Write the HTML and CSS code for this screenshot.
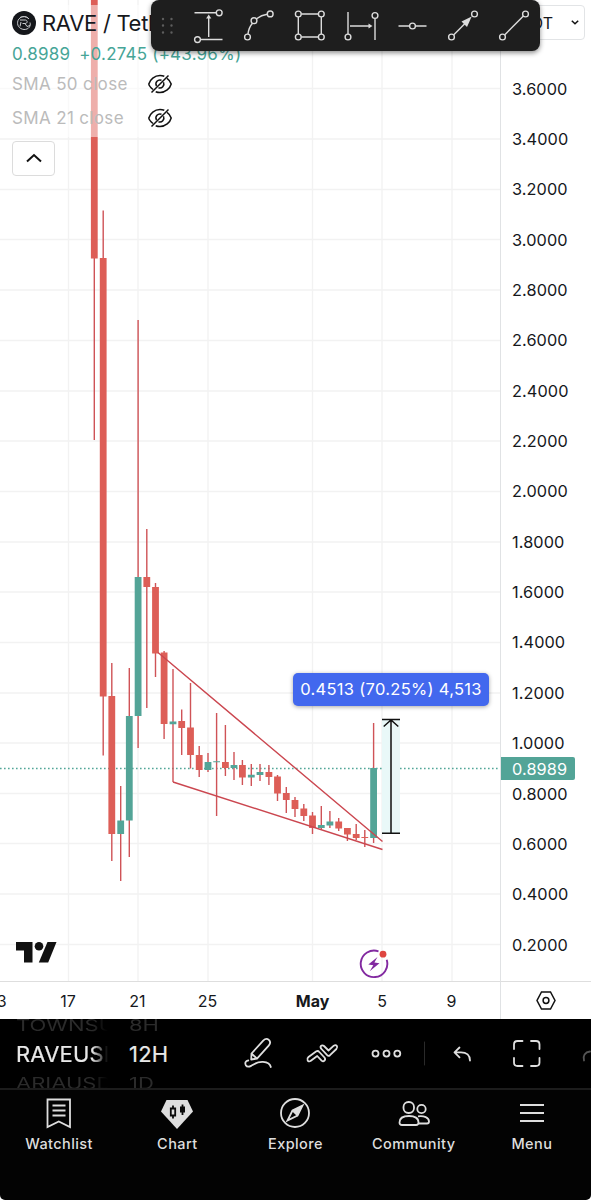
FILE: index.html
```
<!DOCTYPE html>
<html lang="en">
<head>
    <meta charset="UTF-8">
    <meta name="viewport" content="width=device-width, initial-scale=1.0">
    <title>RAVE / Tether</title>
    <link rel="stylesheet" href="styles.css">
</head>
<body>
    <div class="app">
        <main class="chart">
            <section class="pane">
                <svg class="plot" viewBox="0 0 500 981">
                    <!-- grid -->
                    <path class="grid" d="M0 88.5H500M0 139H500M0 189.5H500M0 239.5H500M0 290H500M0 340.5H500M0 391H500M0 441H500M0 491.5H500M0 542H500M0 592H500M0 642.5H500M0 693H500M0 743H500M0 793.5H500M0 843.5H500M0 894H500M0 944.5H500"/>
                    <path class="grid" d="M68.5 0V981M138 0V981M208 0V981M312.5 0V981M382 0V981M452 0V981"/>
                    <path class="price-line" d="M0 768.5H500"/>
                    <rect class="range" x="382" y="720" width="18" height="113"/>
                    <!-- candles -->
                    <path class="wick" d="M94.3 258V440M103.2 210.5V755.5M111.8 663V861M120.7 786V881M129.3 668V857M138.1 320V748M146.8 529V708M155.5 583V677M164.1 651V739M173 669V782M181.7 709.5V755M190.5 683V768.5M199.2 746V777M208 753V772M216.6 713V816M225.4 725V776M234 752V780M242.4 760V785M251.3 764V786M260 764V781M268.9 765V785M277.5 775V801M286.3 787V813M295 797V817M303.8 804V821M312.5 812V834M321.3 806V829M329.9 811V828M338.7 818V831M347.4 828V841M356.2 824V840M364.8 830V847M373.6 723V843"/>
                    <path class="down" d="M94.3 0V258.5M103.2 258V696.5M111.8 696V834M146.8 577V587M155.5 587V653.5M164.1 652.5V724M181.7 721V728M190.5 727.5V755M199.2 755V770M225.4 762V768M242.4 765V777.5M268.9 772V777M277.5 776.5V793.5M286.3 793V800M295 800V809M303.8 808.5V816M312.5 815.5V828M338.7 821.5V828.5M347.4 828V834.5M356.2 834V838M364.8 837V838"/>
                    <path class="up" d="M120.7 820.5V834M129.3 716V820.5M138.1 577V716M173 721.5V724.2M208 762V770M216.6 761.2V762.2M234 765V768M251.3 774.7V777.5M260 772V775M321.3 825V828M329.9 821.5V825.5M373.6 768V838"/>
                    <!-- wedge -->
                    <path class="wedge" d="M158 652.5L382.5 841.5M173 782L382.5 849.5"/>
                    <!-- price range tool -->
                    <path class="ruler" d="M382 719.5H400M382 833.3H400M391 833V720M383.7 726.5L391 720L398.3 726.5"/>
                </svg>

                <div class="legend">
                    <div class="symbol">
                        <svg class="coin" width="24" height="24" viewBox="0 0 24 24">
                            <circle cx="12" cy="12" r="12" fill="#15171b"/>
                            <path d="M17 8A6.500 6.500 0 0 0 6 9.500C4.500 14 7 18 12 18.500C17 18.500 19 15 18 11.500M8 9H13.500C16 9.500 15.500 12.500 13 12.500H10.500M9 11L8 15.500M13 12.500L15 15.500L18 14.500M8 6.500C11 5 14 5.500 16 7" fill="none" stroke="#c9cbce" stroke-width="1"/>
                        </svg>
                        <span class="name">RAVE / Tether</span>
                    </div>
                    <div class="quote"><span>0.8989</span><span>+0.2745 (+43.96%)</span></div>
                    <div class="study">
                        <span>SMA 50 close</span>
                        <svg width="24" height="20" viewBox="0 0 24 20"><path d="M5 15.500C2.500 13.500 1 11.500 .8 10C2 5.500 6.500 1.500 12 1.500C13.500 1.500 15 1.800 16.300 2.300M19 4.300C21.500 6 22.700 8.300 23.200 10C22 14.500 17.500 18.500 12 18.500C10.500 18.500 9 18.200 7.700 17.700M8.500 12A4 4 0 0 1 13.500 6.300M15.500 8.300A4 4 0 0 1 10.500 13.700M3.500 18.500L20.500 1.500"/></svg>
                    </div>
                    <div class="study">
                        <span>SMA 21 close</span>
                        <svg width="24" height="20" viewBox="0 0 24 20"><path d="M5 15.500C2.500 13.500 1 11.500 .8 10C2 5.500 6.500 1.500 12 1.500C13.500 1.500 15 1.800 16.300 2.300M19 4.300C21.500 6 22.700 8.300 23.200 10C22 14.500 17.500 18.500 12 18.500C10.500 18.500 9 18.200 7.700 17.700M8.500 12A4 4 0 0 1 13.500 6.300M15.500 8.300A4 4 0 0 1 10.500 13.700M3.500 18.500L20.500 1.500"/></svg>
                    </div>
                </div>
                <button class="collapse" aria-label="Collapse">
                    <svg width="18" height="10" viewBox="0 0 18 10"><path d="M2 8.500L9 2L16 8.500"/></svg>
                </button>

                <div class="range-label">0.4513 (70.25%) 4,513</div>

                <svg class="tv-logo" width="41" height="21" viewBox="0 0 41 21">
                    <path d="M0 0H16.500V20.500H8V8.500H0Z"/>
                    <circle cx="23" cy="4.300" r="4.300"/>
                    <path d="M31.500 0H40.500L32.200 20.500H22.800Z"/>
                </svg>
                <svg class="event" width="30" height="30" viewBox="0 0 30 30">
                    <path d="M19.500 2.300A13.300 13.300 0 1 0 27.700 10.800" fill="none" stroke="#8229a0" stroke-width="1.900"/>
                    <path d="M18.500 8L9.300 15.500L14.300 16.200L10.700 22.200L20.500 14.300L15.400 13.600Z" fill="#8229a0"/>
                    <circle cx="24" cy="5.200" r="3.400" fill="#df4540"/>
                </svg>
            </section>

            <aside class="price-axis">
                <div class="currency">USDT
                    <svg width="8" height="5" viewBox="0 0 8 5"><path d="M.8 .8L4 3.800L7.200 .8"/></svg>
                </div>
                <span>3.6000</span>
                <span>3.4000</span>
                <span>3.2000</span>
                <span>3.0000</span>
                <span>2.8000</span>
                <span>2.6000</span>
                <span>2.4000</span>
                <span>2.2000</span>
                <span>2.0000</span>
                <span>1.8000</span>
                <span>1.6000</span>
                <span>1.4000</span>
                <span>1.2000</span>
                <span>1.0000</span>
                <span>0.8000</span>
                <span>0.6000</span>
                <span>0.4000</span>
                <span>0.2000</span>
                <div class="last-price">0.8989</div>
            </aside>

            <svg class="time-axis" viewBox="0 0 500 37">
                <text x="-1.500" y="24.500">13</text>
                <text x="68" y="24.500">17</text>
                <text x="137.500" y="24.500">21</text>
                <text x="207.500" y="24.500">25</text>
                <text class="month" x="312.500" y="24.500">May</text>
                <text x="382" y="24.500">5</text>
                <text x="451.500" y="24.500">9</text>
            </svg>
            <div class="axis-settings">
                <svg width="20" height="19" viewBox="0 0 20 19"><path d="M5.500 1H14.500L19 9.500L14.500 18H5.500L1 9.500Z"/><circle cx="10" cy="9.500" r="2.900"/></svg>
            </div>
        </main>

        <!-- floating favourites toolbar -->
        <div class="drawing-bar">
            <svg class="grip" width="32.500" height="51" viewBox="0 0 32.500 51"><path d="M12 19h0M20.500 19h0M12 25.500h0M20.500 25.500h0M12 32.500h0M20.500 32.500h0"/></svg>
            <svg class="tool" viewBox="0 0 51 51">
                <path d="M11.500 12.800H33M18 39.500H39.500M25.700 37V17"/>
                <path class="solid" d="M25.700 14.500L28.300 18.500H23.100Z"/>
                <circle cx="36.200" cy="12.800" r="2.900"/><circle cx="14.500" cy="39.600" r="2.900"/>
            </svg>
            <svg class="tool" viewBox="0 0 51 51">
                <path d="M14 34C14.500 29 16 26 18.500 23.200M22.500 18.800C25.500 16.500 29 14.800 33.200 14.300"/>
                <circle cx="13.500" cy="37" r="2.900"/><circle cx="20" cy="20.700" r="2.900"/><circle cx="36.200" cy="13.900" r="2.900"/>
            </svg>
            <svg class="tool" viewBox="0 0 51 51">
                <path d="M16.300 14H33.300M16.300 37H33.300M13.300 17V34M36.300 17V34"/>
                <circle cx="13.300" cy="14" r="2.900"/><circle cx="36.300" cy="14" r="2.900"/><circle cx="13.300" cy="37" r="2.900"/><circle cx="36.300" cy="37" r="2.900"/>
            </svg>
            <svg class="tool" viewBox="0 0 51 51">
                <path d="M12 12V34M39 18.500V40M14 26H34"/>
                <path class="solid" d="M36.500 26L32.500 28.600V23.400Z"/>
                <circle cx="12" cy="37" r="2.900"/><circle cx="39" cy="15.500" r="2.900"/>
            </svg>
            <svg class="tool" viewBox="0 0 51 51">
                <path d="M11.500 26H22.600M28.400 26H39.500"/>
                <circle cx="25.500" cy="26" r="2.900"/>
            </svg>
            <svg class="tool" viewBox="0 0 51 51">
                <path d="M15.600 34.900L27 23.500"/>
                <path class="solid" d="M33.700 16.500L23.500 21.500L29 27Z"/>
                <circle cx="13.500" cy="37" r="2.900"/><circle cx="36.500" cy="14" r="2.900"/>
            </svg>
            <svg class="tool" viewBox="0 0 51 51">
                <path d="M15.600 34.900L34.400 16.100"/>
                <circle cx="13.500" cy="37" r="2.900"/><circle cx="36.500" cy="14" r="2.900"/>
            </svg>
        </div>

        <section class="controls">
            <div class="wheel wheel-symbol">
                <span class="side">TOWNSU</span>
                <span class="current">RAVEUSD</span>
                <span class="side">ARIAUSD</span>
            </div>
            <div class="wheel wheel-interval">
                <span class="side">8H</span>
                <span class="current">12H</span>
                <span class="side">1D</span>
            </div>
            <svg class="actions" viewBox="0 0 351 69">
                <!-- draw -->
                <path d="M11.500 34.500L23.200 21.700C25.500 19.300 27.300 19.500 28.800 20.900C30.500 22.500 30.600 24.500 28.700 26.600L17 39.600L11.200 40.500ZM11.500 34.500L17 39.600"/>
                <path d="M8.300 41.500C5.500 41.800 4.700 44 5.800 46.200C7 48.200 9 48 11.500 46.600C15.500 44 19 42.600 23 42.900C27.500 43.300 30.300 45.500 30.800 48"/>
                <!-- indicators -->
                <path d="M68.500 38L76 32.500C77.300 31.700 78.500 32 79.300 33L84.500 38.500C86.300 40.800 83.600 43.300 81.600 41.600L77.200 37L70.500 42C67.800 43.400 66.100 40.100 68.500 38ZM81.500 30C79.300 27.800 81.600 25 84 27L88.500 31.500L93.800 26.700C96.300 25 98.400 27.800 96.400 30L90 36.200C89 37 88 37 87.200 36.200Z"/>
                <!-- more -->
                <circle cx="135.500" cy="34.600" r="3"/><circle cx="146.500" cy="34.600" r="3"/><circle cx="157.300" cy="34.600" r="3"/>
                <path class="split" d="M184.500 23V46"/>
                <!-- undo -->
                <path d="M219.500 28.500L214.500 33.300L219.500 38.300M215 33.300H221C226.500 33.300 230 36.500 230 41.500"/>
                <!-- fullscreen -->
                <path d="M274 30V25.500Q274 22 277.500 22H282.500M291 22H296Q299.500 22 299.500 25.500V30M299.500 39V43.500Q299.500 47 296 47H291M282.500 47H277.500Q274 47 274 43.500V39"/>
                <path class="faded" d="M344 41.500C342.500 37 345 33 350 32.500"/>
            </svg>
        </section>

        <nav class="tabs">
            <a class="tab">
                <svg width="32" height="32" viewBox="0 0 32 32"><path d="M4.500 2.500H27V30L15.800 24.500L4.500 30ZM9.500 8.500H22.500M9.500 13.500H22.500M9.500 18.500H22.500"/></svg>
                <span>Watchlist</span>
            </a>
            <a class="tab">
                <svg width="32" height="32" viewBox="0 0 32 32">
                    <path class="fill" d="M5.500 3H26.500L32 14.500L16 32L0 14.500Z"/>
                    <path class="cut" d="M9.800 11.500H14.200V18.500H9.800ZM12 8.500V11M12 19V21.500M21.500 7.500V18"/>
                    <path class="cut-fill" d="M19 9.500H24V15.500H19Z"/>
                </svg>
                <span>Chart</span>
            </a>
            <a class="tab">
                <svg width="32" height="32" viewBox="0 0 32 32">
                    <circle cx="16" cy="16" r="14"/>
                    <path class="fill" d="M23.500 8.500L12.500 13.800L18.500 19.500Z"/>
                    <path d="M23.500 8.500L13.500 13.500L8.500 23.500L18.500 18.500Z"/>
                </svg>
                <span>Explore</span>
            </a>
            <a class="tab">
                <svg width="32" height="32" viewBox="0 0 32 32"><rect x="5.500" y="5" width="10.500" height="11" rx="5"/><circle cx="23.500" cy="12" r="4.200"/><path d="M1.500 25.500C1.500 21 5 19 11 19S20.500 21 20.500 25.500Q20.500 28 18 28H4Q1.500 28 1.500 25.500ZM20 19.300C26 18.500 31 20.500 31 24.500Q31 26.500 29 26.500H20"/></svg>
                <span>Community</span>
            </a>
            <a class="tab">
                <svg width="32" height="32" viewBox="0 0 32 32"><path d="M4 8H28M4 16H28M4 24H28"/></svg>
                <span>Menu</span>
            </a>
        </nav>
    </div>
</body>
</html>
```
FILE: styles.css
```
body {
    margin: 0;
    background: #fff;
    color: #16181c;
    font-family: Inter, sans-serif;
}
svg {
    display: block;
    flex: none;
}
.app {
    position: relative;
    width: 591px;
    height: 1200px;
    overflow: hidden;
}

/* chart */
.chart {
    display: grid;
    grid-template-columns: 500px 91px;
    grid-template-rows: 981px 38px;
    height: 1019px;
}
.pane {
    position: relative;
}
.plot {
    width: 500px;
    height: 981px;
}
.plot path {
    fill: none;
}
.plot .grid {
    stroke: #f2f2f2;
    stroke-width: 1.3;
}
.plot .price-line {
    stroke: #53a698;
    stroke-width: 1.3;
    stroke-dasharray: 1.6 2.4;
}
.plot .range {
    fill: #e9f8f8;
}
.plot .wick {
    stroke: #cf5357;
    stroke-width: 1.4;
}
.plot .down {
    stroke: #dd5e57;
    stroke-width: 6.8;
}
.plot .up {
    stroke: #53a497;
    stroke-width: 6.8;
}
.plot .wedge {
    stroke: #cb4750;
    stroke-width: 1.4;
}
.plot .ruler {
    stroke: #111;
    stroke-width: 1.5;
}

.legend {
    position: absolute;
    top: 5px;
    left: 0;
    width: 180px;
    height: 132px;
    padding-left: 12px;
    box-sizing: border-box;
    background: rgba(255, 255, 255, 0.5);
    white-space: nowrap;
}
.symbol {
    display: flex;
    align-items: center;
    gap: 6px;
    height: 36px;
    font-size: 22px;
    letter-spacing: -0.3px;
}
.quote {
    display: flex;
    gap: 9px;
    height: 24px;
    margin-bottom: 1px;
    align-items: center;
    padding-top: 1px;
    font-size: 17px;
    letter-spacing: 0.2px;
    color: #46a597;
}
.study {
    display: flex;
    align-items: center;
    height: 35px;
    margin-top: -1px;
    font-size: 17px;
    letter-spacing: 0.35px;
    color: #bbb;
}
.study span {
    width: 136px;
}
.study svg,
.collapse svg,
.currency svg,
.axis-settings svg {
    fill: none;
    stroke: #111;
    stroke-width: 1.5;
}
.collapse {
    position: absolute;
    top: 141px;
    left: 12px;
    width: 43px;
    height: 35px;
    display: flex;
    align-items: center;
    justify-content: center;
    padding: 0 0 2px;
    background: #fff;
    border: 1px solid #dcdcdc;
    border-radius: 4px;
}
.collapse svg {
    stroke-width: 2;
}
.range-label {
    position: absolute;
    top: 673px;
    left: 293px;
    width: 196px;
    height: 33px;
    border-radius: 5px;
    background: #4268ee;
    box-shadow: 0 1px 4px rgba(0, 0, 0, 0.35);
    color: #fff;
    font-size: 16.5px;
    letter-spacing: 0.3px;
    line-height: 33px;
    text-align: center;
    white-space: nowrap;
}
.tv-logo {
    position: absolute;
    top: 942px;
    left: 16px;
    fill: #111;
}
.event {
    position: absolute;
    top: 949px;
    left: 359px;
}

/* axes */
.price-axis {
    position: relative;
    display: flex;
    flex-direction: column;
    padding-top: 63.5px;
    box-sizing: border-box;
    border-left: 1px solid #e0e2e4;
    font-size: 16.3px;
    letter-spacing: 0.1px;
}
.price-axis span {
    flex: none;
    height: 50.36px;
    line-height: 51px;
    padding-left: 11px;
}
.currency {
    position: absolute;
    top: 5px;
    left: 2px;
    width: 82px;
    height: 35px;
    box-sizing: border-box;
    display: flex;
    align-items: center;
    justify-content: flex-end;
    gap: 18px;
    padding-right: 5px;
    border: 1px solid #e2e4e6;
    border-radius: 4px;
    font-size: 16px;
    letter-spacing: 0;
}
.last-price {
    position: absolute;
    top: 757px;
    left: 0;
    width: 63px;
    height: 23px;
    padding-left: 11px;
    border-radius: 0 2px 2px 0;
    background: #53a497;
    color: #fff;
    line-height: 24px;
}
.time-axis,
.axis-settings {
    box-sizing: border-box;
    border-top: 1px solid #dedede;
}
.time-axis {
    width: 500px;
    height: 38px;
    font-size: 16px;
    fill: #16181c;
    text-anchor: middle;
}
.time-axis .month {
    font-weight: 700;
}
.axis-settings {
    display: flex;
    align-items: center;
    justify-content: center;
    border-left: 1px solid #e0e2e4;
}

/* drawing toolbar */
.drawing-bar {
    position: absolute;
    top: 0;
    left: 150.5px;
    width: 389.5px;
    height: 51px;
    display: flex;
    border-radius: 8px;
    background: #1e1e1e;
    box-shadow: 0 2px 5px rgba(0, 0, 0, 0.45);
}
.drawing-bar svg {
    fill: none;
    stroke: #dcdcdc;
    stroke-width: 1.4;
}
.drawing-bar .grip {
    stroke: #5e5e5e;
    stroke-width: 2.4;
    stroke-linecap: round;
}
.tool {
    width: 51px;
    height: 51px;
}
.drawing-bar .solid {
    fill: #dcdcdc;
    stroke: none;
}

/* bottom */
.controls {
    display: flex;
    height: 69px;
    overflow: hidden;
    background: #000;
    color: #e8e8e8;
    border-bottom: 2px solid #1c1c1c;
}
.wheel {
    display: flex;
    flex-direction: column;
    align-items: flex-start;
    box-sizing: border-box;
    height: 69px;
    overflow: hidden;
    font-size: 22px;
    white-space: nowrap;
}
.wheel-symbol {
    width: 107px;
    margin-left: 16px;
    -webkit-mask-image: linear-gradient(90deg, #000 76px, transparent 92px);
    mask-image: linear-gradient(90deg, #000 76px, transparent 92px);
}
.wheel-interval {
    width: 116px;
    margin-left: 6px;
}
.side {
    flex: none;
    height: 14px;
    line-height: 13px;
    color: #2b2b2b;
    transform: scaleY(0.72);
}
.side:last-child {
    height: 15px;
    line-height: 14px;
}
.current {
    flex: none;
    height: 43px;
    line-height: 42px;
    letter-spacing: 0.2px;
    -webkit-text-stroke: 0.2px #e8e8e8;
}
.actions {
    width: 351px;
    height: 69px;
    margin-left: -5px;
    fill: none;
    stroke: #dfdfdf;
    stroke-width: 1.8;
    stroke-linecap: round;
    stroke-linejoin: round;
}
.actions .split {
    stroke: #2a2a2a;
    stroke-width: 1;
}
.actions .faded {
    stroke: #555;
}
.tabs {
    display: grid;
    grid-template-columns: repeat(5, 1fr);
    height: 110px;
    background: #030303;
    border-radius: 0 0 5px 5px;
}
.tab {
    display: flex;
    flex-direction: column;
    align-items: center;
    padding-top: 7px;
    color: #dedede;
    font-size: 14.5px;
    font-weight: 500;
    letter-spacing: 0.4px;
}
.tab svg {
    margin-bottom: 6px;
    fill: none;
    stroke: #dedede;
    stroke-width: 1.8;
}
.tab .fill {
    fill: #dedede;
    stroke: none;
}
.tab .cut {
    stroke: #0a0a0a;
}
.tab .cut-fill {
    fill: #0a0a0a;
    stroke: none;
}
```
